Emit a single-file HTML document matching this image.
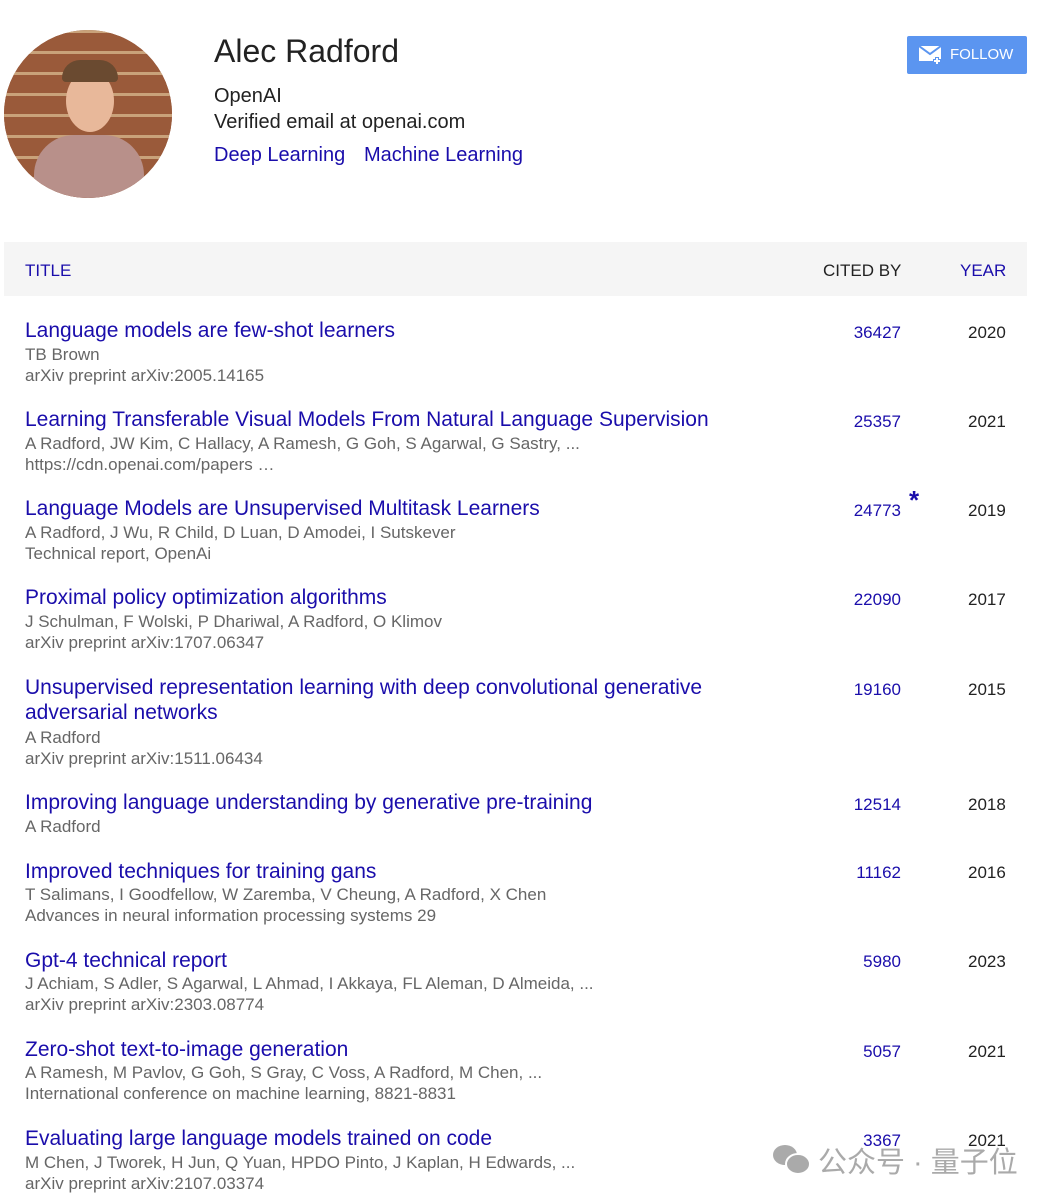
<!DOCTYPE html><html><head><meta charset="utf-8"><style>
body{margin:0;width:1056px;height:1200px;background:#fff;font-family:"Liberation Sans",Arial,sans-serif;position:relative;overflow:hidden}
.a{position:absolute;white-space:nowrap;margin-top:1px}
.t{font-size:21px;color:#1a0dab;line-height:26px}
.s{font-size:17px;color:#666;line-height:20px}
.c{font-size:17px;color:#1a0dab;line-height:20px;right:155px;text-align:right}
.y{font-size:17px;color:#222;line-height:20px;left:968px}
</style></head><body>
<div class="a" style="left:4px;top:29px;width:168px;height:168px;border-radius:50%;overflow:hidden;background:#8a4a30">
<div style="position:absolute;left:0;top:0;width:168px;height:168px;background:repeating-linear-gradient(0deg,#9a5a3a 0 18px,#c9a27a 18px 21px)"></div>
<div style="position:absolute;left:30px;top:105px;width:110px;height:80px;border-radius:40px 40px 0 0;background:#b8908a"></div>
<div style="position:absolute;left:62px;top:40px;width:48px;height:62px;border-radius:50%;background:#e8b89a"></div>
<div style="position:absolute;left:58px;top:30px;width:56px;height:22px;border-radius:28px 28px 6px 6px;background:#6a4a30"></div>
</div>
<div class="a" style="left:214px;top:32px;font-size:32px;color:#222">Alec Radford</div>
<div class="a" style="left:214px;top:84px;font-size:20px;color:#222">OpenAI</div>
<div class="a" style="left:214px;top:110px;font-size:20px;color:#222">Verified email at openai.com</div>
<div class="a" style="left:214px;top:143px;font-size:20px;color:#1a0dab">Deep Learning</div>
<div class="a" style="left:364px;top:143px;font-size:20px;color:#1a0dab">Machine Learning</div>
<div class="a" style="left:907px;top:35px;width:120px;height:38px;background:#5b95f0;border-radius:2px;color:#fff;font-size:15px">
<svg style="position:absolute;left:12px;top:9px" width="24" height="20" viewBox="0 0 24 20"><rect x="0" y="1" width="22" height="15" fill="#fff"/><path d="M0 1l11 8 11-8" stroke="#5b95f0" stroke-width="2" fill="none"/><path d="M18 12v8M14 16h8" stroke="#5b95f0" stroke-width="4"/><path d="M18 13v6M15 16h6" stroke="#fff" stroke-width="2"/></svg>
<span style="position:absolute;left:43px;top:10px">FOLLOW</span></div>
<div class="a" style="left:4px;top:241px;width:1023px;height:54px;background:#f5f5f5"></div>
<div class="a" style="left:25px;top:260px;font-size:17px;color:#1a0dab">TITLE</div>
<div class="a" style="left:823px;top:260px;font-size:17px;color:#222">CITED BY</div>
<div class="a" style="left:960px;top:260px;font-size:17px;color:#1a0dab">YEAR</div>

<div class="a t" style="left:25px;top:317px">Language models are few-shot learners</div>
<div class="a s" style="left:25px;top:344px">TB Brown</div>
<div class="a s" style="left:25px;top:365px">arXiv preprint arXiv:2005.14165</div>
<div class="a c" style="top:322px">36427</div><div class="a y" style="top:322px">2020</div>

<div class="a t" style="left:25px;top:406px">Learning Transferable Visual Models From Natural Language Supervision</div>
<div class="a s" style="left:25px;top:433px">A Radford, JW Kim, C Hallacy, A Ramesh, G Goh, S Agarwal, G Sastry, ...</div>
<div class="a s" style="left:25px;top:454px">https://cdn.openai.com/papers …</div>
<div class="a c" style="top:411px">25357</div><div class="a y" style="top:411px">2021</div>

<div class="a t" style="left:25px;top:495px">Language Models are Unsupervised Multitask Learners</div>
<div class="a s" style="left:25px;top:522px">A Radford, J Wu, R Child, D Luan, D Amodei, I Sutskever</div>
<div class="a s" style="left:25px;top:543px">Technical report, OpenAi</div>
<div class="a c" style="top:500px">24773</div><div class="a y" style="top:500px">2019</div>
<div class="a" style="left:909px;top:484px;font-size:26px;font-weight:bold;color:#1a0dab">*</div>

<div class="a t" style="left:25px;top:584px">Proximal policy optimization algorithms</div>
<div class="a s" style="left:25px;top:611px">J Schulman, F Wolski, P Dhariwal, A Radford, O Klimov</div>
<div class="a s" style="left:25px;top:632px">arXiv preprint arXiv:1707.06347</div>
<div class="a c" style="top:589px">22090</div><div class="a y" style="top:589px">2017</div>

<div class="a t" style="left:25px;top:674px">Unsupervised representation learning with deep convolutional generative</div>
<div class="a t" style="left:25px;top:699px">adversarial networks</div>
<div class="a s" style="left:25px;top:727px">A Radford</div>
<div class="a s" style="left:25px;top:748px">arXiv preprint arXiv:1511.06434</div>
<div class="a c" style="top:679px">19160</div><div class="a y" style="top:679px">2015</div>

<div class="a t" style="left:25px;top:789px">Improving language understanding by generative pre-training</div>
<div class="a s" style="left:25px;top:816px">A Radford</div>
<div class="a c" style="top:794px">12514</div><div class="a y" style="top:794px">2018</div>

<div class="a t" style="left:25px;top:858px">Improved techniques for training gans</div>
<div class="a s" style="left:25px;top:884px">T Salimans, I Goodfellow, W Zaremba, V Cheung, A Radford, X Chen</div>
<div class="a s" style="left:25px;top:905px">Advances in neural information processing systems 29</div>
<div class="a c" style="top:862px">11162</div><div class="a y" style="top:862px">2016</div>

<div class="a t" style="left:25px;top:947px">Gpt-4 technical report</div>
<div class="a s" style="left:25px;top:973px">J Achiam, S Adler, S Agarwal, L Ahmad, I Akkaya, FL Aleman, D Almeida, ...</div>
<div class="a s" style="left:25px;top:994px">arXiv preprint arXiv:2303.08774</div>
<div class="a c" style="top:951px">5980</div><div class="a y" style="top:951px">2023</div>

<div class="a t" style="left:25px;top:1036px">Zero-shot text-to-image generation</div>
<div class="a s" style="left:25px;top:1062px">A Ramesh, M Pavlov, G Goh, S Gray, C Voss, A Radford, M Chen, ...</div>
<div class="a s" style="left:25px;top:1083px">International conference on machine learning, 8821-8831</div>
<div class="a c" style="top:1041px">5057</div><div class="a y" style="top:1041px">2021</div>

<div class="a t" style="left:25px;top:1125px">Evaluating large language models trained on code</div>
<div class="a s" style="left:25px;top:1152px">M Chen, J Tworek, H Jun, Q Yuan, HPDO Pinto, J Kaplan, H Edwards, ...</div>
<div class="a s" style="left:25px;top:1173px">arXiv preprint arXiv:2107.03374</div>
<div class="a c" style="top:1130px">3367</div><div class="a y" style="top:1130px">2021</div>

<svg class="a" style="left:771px;top:1142px" width="42" height="34" viewBox="0 0 42 34"><ellipse cx="14" cy="12" rx="12" ry="10" fill="#aaa"/><ellipse cx="27" cy="21" rx="12" ry="10" fill="#aaa" stroke="#fff" stroke-width="2"/></svg>
<div class="a" style="left:818px;top:1138px;font-size:29px;color:#aaa;font-family:'Liberation Sans','Noto Sans CJK SC',sans-serif">公众号 · 量子位</div>
</body></html>
